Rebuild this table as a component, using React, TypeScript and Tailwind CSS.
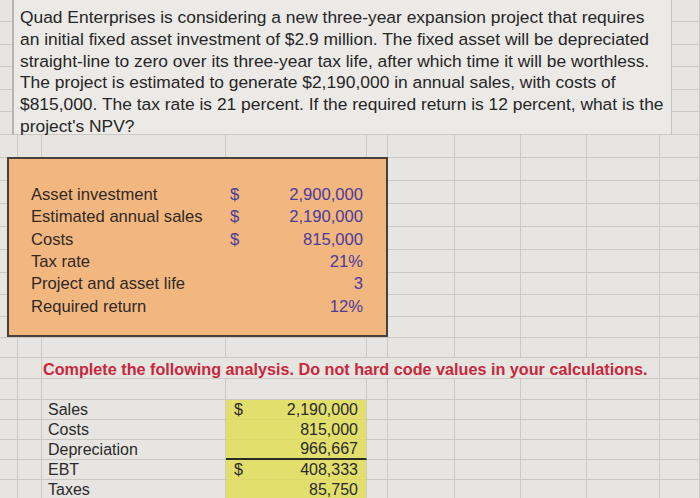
import React from "react";

const COLS = 10;
const ROW_H = [22, 23, 22, 23, 22, 23, 23, 23, 23, 23, 23, 23, 22, 22, 21, 20, 21, 21, 20, 20, 20, 20, 20];

const bottomRows: { label: string; dollar: boolean; value: string; rule?: boolean }[] = [
  { label: "Sales", dollar: true, value: "2,190,000" },
  { label: "Costs", dollar: false, value: "815,000" },
  { label: "Depreciation", dollar: false, value: "966,667", rule: true },
  { label: "EBT", dollar: true, value: "408,333" },
  { label: "Taxes", dollar: false, value: "85,750" },
];

const inputs: { label: string; dollar: boolean; value: string }[] = [
  { label: "Asset investment", dollar: true, value: "2,900,000" },
  { label: "Estimated annual sales", dollar: true, value: "2,190,000" },
  { label: "Costs", dollar: true, value: "815,000" },
  { label: "Tax rate", dollar: false, value: "21%" },
  { label: "Project and asset life", dollar: false, value: "3" },
  { label: "Required return", dollar: false, value: "12%" },
];

const cell = "border-r border-b border-[#cac9c4]";

function Row({ r }: { r: number }) {
  if (r === 16) {
    return (
      <>
        <div className={cell} />
        <div className={cell} />
        <div className={`col-span-7 ${cell} flex items-center pl-[1px] pt-[3px] whitespace-nowrap text-[16.2px] font-bold text-[#c8273d]`}>
          Complete the following analysis. Do not hard code values in your calculations.
        </div>
        <div className={cell} />
      </>
    );
  }
  if (r >= 18) {
    const d = bottomRows[r - 18];
    return (
      <>
        <div className={cell} />
        <div className={cell} />
        <div className={`${cell} flex items-center pl-[6px] text-[16px] text-[#2a2a2a]`}>{d.label}</div>
        <div
          className={`border-r border-[#cac9c4] ${
            d.rule ? "border-b-2 border-b-[#2a2a2a]" : "border-b border-b-[#dcd96a]"
          } bg-[#e2df6d] flex items-center justify-between pl-[8px] pr-[8px] text-[16px] text-[#2a2a2a]`}
        >
          <span>{d.dollar ? "$" : ""}</span>
          <span>{d.value}</span>
        </div>
        {Array.from({ length: COLS - 4 }).map((_, i) => (
          <div key={i} className={cell} />
        ))}
      </>
    );
  }
  return (
    <>
      {Array.from({ length: COLS }).map((_, i) => (
        <div key={i} className={cell} />
      ))}
    </>
  );
}

export default function App() {
  return (
    <div
      className="relative w-[700px] h-[498px] overflow-hidden bg-[#e6e5e1]"
      style={{ fontFamily: '"Liberation Sans", Arial, sans-serif' }}
    >
      <div className="grid grid-cols-[18px_24px_184px_141px_21px_67px_66px_66px_73px_40px] grid-rows-[22px_23px_22px_23px_22px_23px_23px_23px_23px_23px_23px_23px_22px_22px_21px_20px_21px_21px_20px_20px_20px_20px_20px]">
        {ROW_H.map((_, r) => (
          <Row key={r} r={r} />
        ))}
      </div>

      {/* text box */}
      <div className="absolute left-[12px] top-0 w-[660px] h-[135px] bg-[#ebeae6] border-l-2 border-l-[#b5b4b0] border-r border-r-[#c4c3bf] border-b border-b-[#cac9c4] pl-[6px] pt-[7px] text-[17.4px] leading-[21.8px] text-[#262626]">
        <div className="whitespace-nowrap">Quad Enterprises is considering a new three-year expansion project that requires</div>
        <div className="whitespace-nowrap">an initial fixed asset investment of $2.9 million. The fixed asset will be depreciated</div>
        <div className="whitespace-nowrap">straight-line to zero over its three-year tax life, after which time it will be worthless.</div>
        <div className="whitespace-nowrap">The project is estimated to generate $2,190,000 in annual sales, with costs of</div>
        <div className="whitespace-nowrap">$815,000. The tax rate is 21 percent. If the required return is 12 percent, what is the</div>
        <div className="whitespace-nowrap">project's NPV?</div>
      </div>

      {/* orange input box */}
      <div className="absolute left-[7px] top-[157px] w-[381px] h-[180px] bg-[#f2b67f] border-2 border-[#4a403a] pt-[25px] pl-[22px]">
        {inputs.map((d) => (
          <div key={d.label} className="flex h-[22.4px] items-center text-[16.6px]">
            <span className="w-[199px] text-[#2f2925] whitespace-nowrap">{d.label}</span>
            <span className="w-[14px] text-[#4b3b9e]">{d.dollar ? "$" : ""}</span>
            <span className="w-[119px] text-right text-[#4b3b9e]">{d.value}</span>
          </div>
        ))}
      </div>
    </div>
  );
}
